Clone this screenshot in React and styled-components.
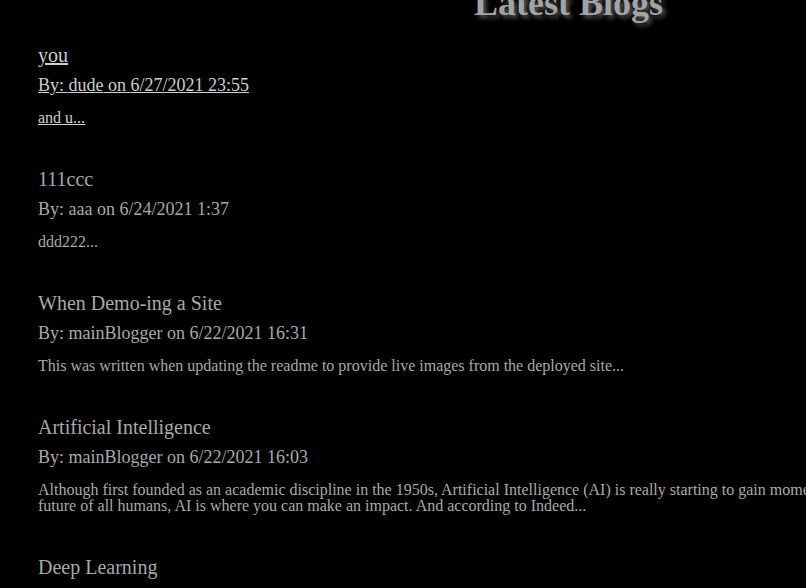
import React from "react";
import styled, { createGlobalStyle } from "styled-components";

const GlobalStyle = createGlobalStyle`
  html, body {
    margin: 0;
    padding: 0;
    background: #000;
    overflow: hidden;
  }
  body {
    font-family: "Liberation Serif", "Times New Roman", serif;
  }
`;

const Page = styled.div`
  width: 1061px;
  padding-left: 38px;
  color: #a9a9a9;
`;

const PageTitle = styled.h1`
  margin: -17px 0 20px;
  font-size: 36px;
  line-height: 40px;
  font-weight: bold;
  text-align: center;
  color: #a3a3a3;
  text-shadow: 3px 3px 4px #555;
`;

const PostList = styled.div`
  display: flex;
  flex-direction: column;
  gap: 41px;
`;

const Post = styled.a`
  display: flex;
  flex-direction: column;
  color: ${props => (props.hovered ? "#cfcfcf" : "#a9a9a9")};
  text-decoration: ${props => (props.hovered ? "underline" : "none")};
`;

const PostTitle = styled.div`
  font-size: 20px;
  line-height: 24px;
`;

const Byline = styled.div`
  margin-top: 7px;
  font-size: 18px;
  line-height: 22px;
`;

const Excerpt = styled.div`
  margin-top: 14px;
  font-size: 16px;
  line-height: 16px;
`;

const posts = [
  {
    title: "you",
    author: "dude",
    date: "6/27/2021 23:55",
    excerpt: "and u...",
  },
  {
    title: "111ccc",
    author: "aaa",
    date: "6/24/2021 1:37",
    excerpt: "ddd222...",
  },
  {
    title: "When Demo-ing a Site",
    author: "mainBlogger",
    date: "6/22/2021 16:31",
    excerpt:
      "This was written when updating the readme to provide live images from the deployed site...",
  },
  {
    title: "Artificial Intelligence",
    author: "mainBlogger",
    date: "6/22/2021 16:03",
    excerpt:
      "Although first founded as an academic discipline in the 1950s, Artificial Intelligence (AI) is really starting to gain momentum in our world. If you want to shape the future of all humans, AI is where you can make an impact. And according to Indeed...",
  },
  {
    title: "Deep Learning",
    author: "mainBlogger",
    date: "6/21/2021 20:14",
    excerpt: "Deep learning is a subset of machine learning...",
  },
];

export default function App() {
  return (
    <>
      <GlobalStyle />
      <Page>
        <PageTitle>Latest Blogs</PageTitle>
        <PostList>
          {posts.map((post, i) => (
            <Post key={post.title} href="#" hovered={i === 0}>
              <PostTitle>{post.title}</PostTitle>
              <Byline>
                By: {post.author} on {post.date}
              </Byline>
              <Excerpt>{post.excerpt}</Excerpt>
            </Post>
          ))}
        </PostList>
      </Page>
    </>
  );
}
